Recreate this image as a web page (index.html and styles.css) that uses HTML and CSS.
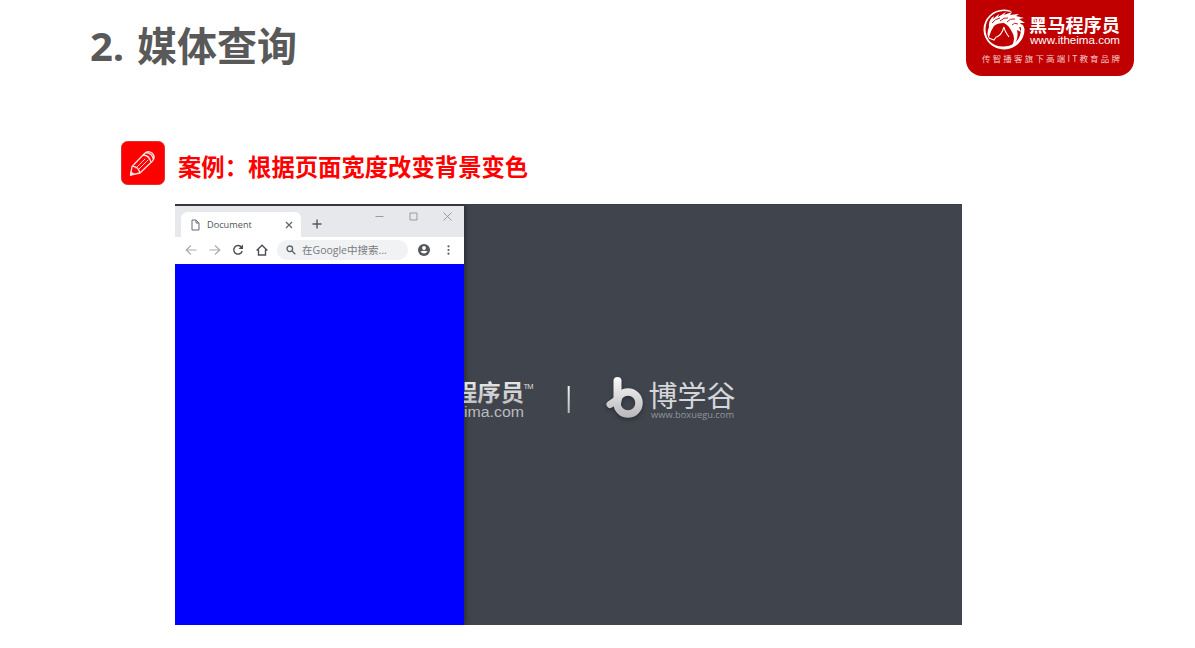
FILE: index.html
```html
<!DOCTYPE html>
<html lang="zh-CN">
<head>
<meta charset="utf-8">
<title>媒体查询</title>
<link rel="stylesheet" href="styles.css">
</head>
<body>
<main class="slide">
  <header class="slide-header">
    <h1 class="title"><span class="title-number">2.</span><span>媒体查询</span></h1>
    <div class="brand">
      <svg class="brand-art" viewBox="0 0 168 76">
        <path fill="#fff" fill-rule="evenodd" d="M38 9.500A20.500 20 0 1 0 58.500 29L57 25L54.500 24C57 37 50 46 38 46.500C26 47 19.500 39 19.500 29C19.500 19 27 11.500 38 11L46 12L44 10.500Q41 9.500 38 9.500Z"/>
        <path fill="#fff" d="M23 27Q22 20 28 16L27 19L33 14L32 17L40 12L38 15L46 12L44 15L53 14L50 16L58 18L53 19L59 23L54 23L58 28L53 27L55 32L51 30Q53 38 48 45L46 46Q50 38 46 32C44 28 42 25 38 23Q31 23 28 26Q25 30 23 37L25 39L23 39Q20 34 23 27Z"/>
        <path fill="none" stroke="#c00000" stroke-width=".9" d="M26 23Q29 19 34 18M34 21Q38 17 42 18M41 22Q44 18 49 19M46 25Q48 22 52 24"/>
        <path fill="none" stroke="#fff" stroke-width="1.100" d="M31 37Q35 35 36.500 31L38 27Q38.500 31 43 37M24 38.500L28 40L30.500 36.500"/>
        <text class="brand-name" x="63" y="32" textLength="91" lengthAdjust="spacingAndGlyphs">黑马程序员</text>
        <text class="brand-url" x="64" y="44" textLength="90" lengthAdjust="spacingAndGlyphs">www.itheima.com</text>
        <text class="brand-slogan" x="16" y="62" textLength="138">传智播客旗下高端IT教育品牌</text>
      </svg>
    </div>
  </header>

  <section class="example">
    <div class="example-heading">
      <svg class="pencil" viewBox="0 0 44 44">
        <rect x=".5" y=".5" width="43" height="43" rx="6" fill="#f00" stroke="#d33"/>
        <g fill="none" stroke="#ffe4e4" stroke-width="1.300" stroke-linejoin="round" stroke-linecap="round">
          <path d="M9.500 34L11 25.500L23.500 12.500Q27 9 31 12Q35 16 31.500 20L19 32ZM11 25.500Q17 25 19 32M22 14Q28 14 30 21M25 11.500Q31 12 32.500 18.500"/>
          <path stroke-width=".9" d="M15 27L24 18M17.500 28.500L27 19"/>
          <path d="M9.500 34L10 31L12.500 33Z" fill="#fff"/>
        </g>
      </svg>
      <h2 class="subtitle">案例：根据页面宽度改变背景变色</h2>
    </div>

    <div class="desktop">
      <div class="browser">
        <div class="tab-bar">
          <div class="tab">
            <svg class="doc-icon" viewBox="0 0 9 12"><path d="M1 1H5L8 4V11H1ZM5 1V4H8"/></svg>
            <span class="tab-title">Document</span>
            <svg class="tab-close" viewBox="0 0 8 8"><path d="M1 1L7 7M7 1L1 7"/></svg>
          </div>
          <svg class="tab-add" viewBox="0 0 10 10"><path d="M5 .5V9.500M.5 5H9.500"/></svg>
          <div class="window-controls">
            <svg viewBox="0 0 9 9"><path d="M.5 4.500H8.500"/></svg>
            <svg viewBox="0 0 9 9"><path d="M1 1H8V8H1Z"/></svg>
            <svg viewBox="0 0 9 9"><path d="M.5 .5L8.500 8.500M8.500 .5L.5 8.500"/></svg>
          </div>
        </div>
        <div class="toolbar">
          <svg class="nav-icon muted" viewBox="0 0 12 12"><path d="M11.500 6H1M6 1.500L1.200 6L6 10.500"/></svg>
          <svg class="nav-icon muted" viewBox="0 0 12 12"><path d="M.5 6H11M6 1.500L10.800 6L6 10.500"/></svg>
          <svg class="nav-icon strong" viewBox="0 0 12 12"><path d="M9.500 3.200A4.300 4.300 0 1 0 10.200 7"/><path class="solid" d="M11 .5V5H6.500Z"/></svg>
          <svg class="nav-icon strong" viewBox="0 0 12 12"><path d="M.6 6.500L6 1.200L11.400 6.500M2.500 5.500V11H9.500V5.500"/></svg>
          <div class="search">
            <svg class="search-icon" viewBox="0 0 10 10"><circle cx="3.800" cy="3.800" r="2.800"/><path d="M6 6L9.300 9.300"/></svg>
            <span>在Google中搜索...</span>
          </div>
          <svg class="user-icon" viewBox="0 0 12 12"><circle cx="6" cy="6" r="6" fill="#54575b"/><circle cx="6" cy="4" r="1.900" fill="#fff"/><path d="M2.300 7.500Q6 6.200 9.700 7.500Q6 11.500 2.300 7.500" fill="#fff"/></svg>
          <svg class="more-icon" viewBox="0 0 3 10"><circle cx="1.500" cy="1.300" r="1.100"/><circle cx="1.500" cy="5" r="1.100"/><circle cx="1.500" cy="8.700" r="1.100"/></svg>
        </div>
        <div class="page"></div>
      </div>
      <div class="wallpaper">
        <svg class="wallpaper-brand" viewBox="0 0 280 60">
          <defs>
            <linearGradient id="silver" x1="0" y1="0" x2="0" y2="1"><stop offset="0" stop-color="#f4f4f4"/><stop offset="1" stop-color="#b8b8ba"/></linearGradient>
            <linearGradient id="mark" gradientUnits="userSpaceOnUse" x1="0" y1="6" x2="0" y2="48"><stop offset="0" stop-color="#fafafa"/><stop offset="1" stop-color="#b5b5b8"/></linearGradient>
          </defs>
          <text class="wall-name" x="-10" y="30" textLength="70" lengthAdjust="spacingAndGlyphs">程序员</text>
          <text class="wall-tm" x="59.500" y="17.500" textLength="10">TM</text>
          <text class="wall-url" x="0" y="46" textLength="60" lengthAdjust="spacingAndGlyphs">ima.com</text>
          <rect x="103.700" y="15" width="2" height="27" fill="url(#silver)"/>
          <g class="mark" fill="none" stroke="url(#mark)">
            <circle cx="164" cy="32" r="11" stroke-width="7.500"/>
            <path d="M153.500 10V30" stroke-width="8" stroke-linecap="round"/>
            <path d="M146 33.500L154 28" stroke-width="7" stroke-linecap="round"/>
          </g>
          <text class="learn-name" x="184.500" y="35.500" textLength="87" lengthAdjust="spacingAndGlyphs">博学谷</text>
          <text class="learn-url" x="187" y="46.500" textLength="83" lengthAdjust="spacingAndGlyphs">www.boxuegu.com</text>
        </svg>
      </div>
    </div>
  </section>
</main>
</body>
</html>
```
FILE: styles.css
```css
* { box-sizing: border-box; }
body { margin: 0; background: #fff; font-family: "Open Sans", "Noto Sans CJK SC", sans-serif; }
svg { display: block; flex: none; }
.slide { width: 1195px; height: 648px; overflow: hidden; }
.slide-header { display: flex; justify-content: space-between; height: 141px; padding: 0 61px 0 90px; }
.title { display: flex; margin: 16px 0 0; height: 60px; line-height: 60px; font-size: 40px; font-weight: 700; color: #595959; }
.title-number { width: 47px; font-family: "Open Sans", sans-serif; }
.brand { width: 168px; height: 76px; background: #c00000; border-radius: 0 0 16px 16px; }
.brand-art { width: 168px; height: 76px; }
.brand-art text { fill: #fff; }
.brand-name { font: 700 18px "Noto Sans CJK SC", sans-serif; }
.brand-url { font: 10.500px "Liberation Sans", sans-serif; }
.brand-art .brand-slogan { font: 8.500px "Noto Sans CJK SC", sans-serif; fill: #f2caca; }

.example-heading { display: flex; height: 63px; padding-left: 121px; gap: 13px; }
.pencil { width: 44px; height: 44px; }
.subtitle { margin: 8px 0 0; height: 35px; font: 700 23.350px/35px "Noto Sans CJK SC", sans-serif; color: #f00; white-space: nowrap; }

.desktop { display: flex; width: 787px; height: 421px; margin-left: 175px; overflow: hidden; background: #40444d; }
.browser { display: flex; flex-direction: column; width: 289px; border-top: 2px solid #393642; box-shadow: 1px 0 5px #25272c; }
.tab-bar { display: flex; height: 31px; padding-left: 6px; background: #e7e8ec; }
.tab { display: flex; align-items: center; width: 120px; height: 25px; margin-top: 6px; padding: 0 8px 0 10px; background: #fff; border-radius: 6px 6px 0 0; }
.doc-icon { width: 9px; height: 12px; fill: none; stroke: #66686c; }
.tab-title { margin-left: 7px; flex: 1; font-size: 9.200px; color: #505358; }
.tab-close { width: 8px; height: 8px; stroke: #606367; stroke-width: 1.200; }
.tab-add { width: 10px; height: 10px; margin: 13px 0 0 11px; stroke: #55585c; stroke-width: 1.400; }
.window-controls { display: flex; gap: 25px; margin: 6px 12px 0 auto; }
.window-controls svg { width: 9px; height: 9px; fill: none; stroke: #919296; stroke-width: .9; }
.toolbar { display: flex; align-items: center; height: 27px; padding: 0 14px 1px 10px; background: #fff; }
.nav-icon { width: 12px; height: 12px; margin-right: 11.500px; fill: none; stroke-width: 1.200; }
.muted { stroke: #aaacae; }
.strong { stroke: #4c4f53; stroke-width: 1.400; }
.nav-icon .solid { fill: #4c4f53; stroke: none; }
.search { display: flex; align-items: center; width: 131px; height: 20px; margin-left: -2px; padding-left: 9px; gap: 6px; border-radius: 10px; background: #f1f2f4; font-size: 10.500px; line-height: 20px; color: #777b80; white-space: nowrap; }
.search-icon { width: 10px; height: 10px; fill: none; stroke: #606367; stroke-width: 1.300; }
.user-icon { width: 12px; height: 12px; margin-left: 10px; }
.more-icon { width: 3px; height: 10px; margin-left: auto; fill: #5b5e62; }
.page { flex: 1; background: #00f; }
.wallpaper { flex: 1; padding-top: 166px; border-top: 1px solid #393c45; }
.wallpaper-brand { width: 280px; height: 60px; }
.wall-name { font: 700 23px "Noto Sans CJK SC", sans-serif; fill: url(#silver); }
.wall-tm { font: 7.500px "Liberation Sans", sans-serif; fill: #ddd; }
.wall-url { font: 14px "Liberation Sans", sans-serif; fill: #b9babd; }
.mark { filter: drop-shadow(0 2px 2px #292c32); }
.learn-name { font: 400 29px "Noto Sans CJK SC", sans-serif; fill: #d5d6d9; }
.learn-url { font: 9px "Open Sans", sans-serif; fill: #92959b; }
```
